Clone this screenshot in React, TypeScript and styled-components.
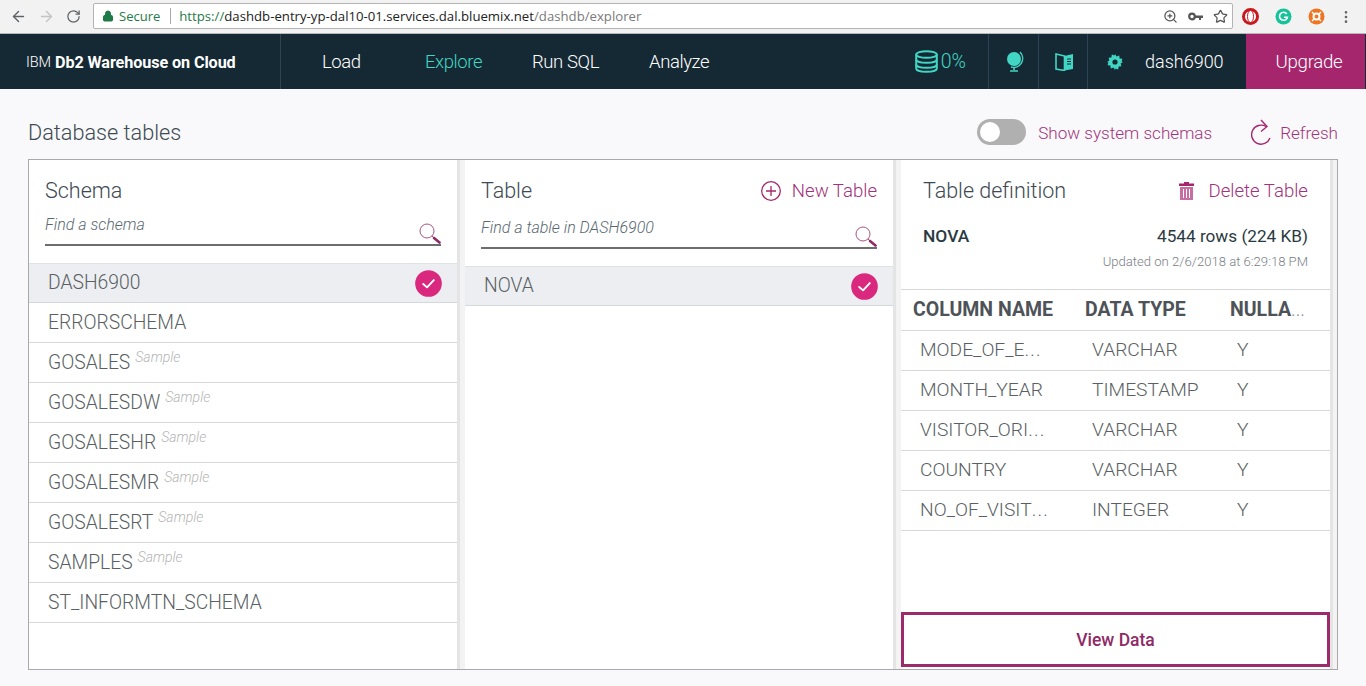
import React from "react";
import styled, { createGlobalStyle } from "styled-components";
import { ArrowLeft, ArrowRight, RotateCw, Lock, ZoomIn, Star, MoreVertical } from "lucide-react";

const Global = createGlobalStyle`
  html, body { margin: 0; padding: 0; background: #f9f9fb; }
  body { font-family: Roboto, "Liberation Sans", sans-serif; font-weight: 300; color: #3d4a52; }
  * { box-sizing: border-box; }
`;

const Page = styled.div`width: 1366px; height: 686px; overflow: hidden; display: flex; flex-direction: column;`;

const Chrome = styled.div`height: 34px; background: #f2f2f2; border-bottom: 1px solid #b8b8b8; display: flex; align-items: center; padding: 0 0 0 10px; flex: none;`;
const NavIcons = styled.div`display: flex; align-items: center; gap: 11px; width: 83px; flex: none; color: #5f6368;`;
const AddressBar = styled.div`width: 1140px; height: 26px; margin-top: -1px; background: #fff; border: 1px solid #b4b4b4; border-radius: 2px; display: flex; align-items: center; padding: 0 4px 0 8px; font: 400 13px "Open Sans", sans-serif;`;
const Secure = styled.span`color: #1e7a46; margin: 0 10px 0 5px;`;
const AddrSep = styled.span`width: 1px; height: 16px; background: #a8a8a8; margin-right: 8px;`;
const Url = styled.span`font-size: 13.2px;`;
const Scheme = styled.span`color: #1e7a46;`;
const Host = styled.span`color: #222;`;
const UrlPath = styled.span`color: #7a7a7a;`;
const AddrIcons = styled.div`margin-left: auto; display: flex; align-items: center; gap: 10px; color: #555;`;
const Extensions = styled.div`display: flex; align-items: center; margin-left: 9px; gap: 16px;`;
const More = styled.div`margin-left: 13px; color: #666; display: flex;`;

const TopNav = styled.header`height: 55px; background: #152935; display: flex; align-items: stretch; flex: none; padding-right: 1px;`;
const Brand = styled.div`width: 281px; flex: none; padding: 2px 0 0 26px; display: flex; align-items: center; gap: 4px; border-right: 1px solid #2c4453; color: #fff; font-size: 14.5px; letter-spacing: -0.1px; b { font-weight: 700; font-size: 16.2px; }`;
const NavItems = styled.nav`display: flex; align-items: center; padding-left: 41px; flex: 1;`;
const NavItem = styled.a<{ $active?: boolean; $w: number }>`width: ${p => p.$w}px; font-size: 18.5px; letter-spacing: -0.4px; color: ${p => (p.$active ? "#41d6c3" : "#fff")};`;
const NavCell = styled.div<{ $w: number }>`width: ${p => p.$w}px; flex: none; display: flex; align-items: center; justify-content: center; border-left: 1px solid #2c4453; padding-left: 2px; color: #fff; font-size: 18.5px;`;
const Usage = styled.div`display: flex; align-items: center; gap: 3px; color: #41d6c3; font-size: 19.5px; margin-right: 22px;`;
const UserCell = styled.div`width: 159px; flex: none; display: flex; align-items: center; padding-left: 19px; gap: 22px; border-left: 1px solid #2c4453; color: #fff; font-size: 18px;`;
const Upgrade = styled.div`width: 119px; flex: none; background: #a6266e; color: #fff; font-size: 18.7px; letter-spacing: -0.3px; display: flex; align-items: center; justify-content: center; padding-left: 7px;`;

const Content = styled.main`flex: 1; padding: 30px 28px 0 28px; display: flex; flex-direction: column;`;
const TitleRow = styled.div`height: 40px; display: flex; align-items: flex-start; justify-content: space-between;`;
const PageTitle = styled.h1`margin: 0; font-size: 21.7px; line-height: 28px; font-weight: 300; color: #3d4a52;`;
const Tools = styled.div`display: flex; align-items: center; height: 26px;`;
const Toggle = styled.div`width: 49px; height: 26px; border-radius: 13px; background: #b0b0b0; padding: 3px; margin-right: 12px;`;
const Knob = styled.div`width: 20px; height: 20px; border-radius: 50%; background: #fff;`;
const ActionText = styled.span<{ $size?: number }>`color: #a2337a; font-size: ${p => p.$size ?? 17.1}px; font-weight: 300; padding-top: 1px;`;
const RefreshBtn = styled.div`display: flex; align-items: center; gap: 9px; margin-left: 39px;`;

const Frame = styled.section`width: 1310px; height: 511px; border: 1px solid #a9a9a9; display: grid; grid-template-columns: 428px 428px 429px; column-gap: 8px; background: #f3f3f3; padding-right: 7px;`;
const Pane = styled.div`background: #fff; display: flex; flex-direction: column; min-width: 0; box-shadow: 3px 0 0 #e4e4e4;`;
const PaneHead = styled.div`padding: 13px 16px 0 16px; display: flex; align-items: center; justify-content: space-between; height: 48px; flex: none;`;
const PaneTitle = styled.h2`margin: 0; font-size: 21.5px; line-height: 24px; font-weight: 300; color: #3d4a52;`;
const HeadAction = styled.div`display: flex; align-items: center;`;
const Search = styled.div<{ $top: number }>`margin: ${p => p.$top}px 16px 17px 16px; height: 32px; border-bottom: 2px solid #6d6d6d; display: flex; justify-content: space-between; flex: none;`;
const Placeholder = styled.span`font-size: 16px; font-style: italic; color: #5a6872; line-height: 18px; padding-top: 2px;`;
const List = styled.div`flex: none;`;
const Row = styled.div<{ $sel?: boolean }>`height: 40px; padding: 0 15px 0 19px; display: flex; align-items: center; justify-content: space-between; font-size: 19.3px; color: #5a5f63; border-bottom: 1px solid ${p => (p.$sel ? "#d4d8dc" : "#d8d8d8")}; background: ${p => (p.$sel ? "#eceef1" : "#fff")}; ${p => (p.$sel ? "border-top: 1px solid #e0e3e6;" : "")}`;
const RowLabel = styled.span`display: flex; align-items: flex-start; line-height: 22px;`;
const Sample = styled.i`font-size: 14px; color: #b4b4b4; margin: -3px 0 0 5px; line-height: 16px;`;

const DefHead = styled.div`padding: 13px 22px 0 22px; height: 48px; display: flex; align-items: center; justify-content: space-between; flex: none;`;
const Summary = styled.div`padding: 16px 22px 0 22px; height: 82px; border-bottom: 1px solid #d8d8d8; flex: none; display: grid; grid-template-columns: 1fr auto; align-content: start;`;
const TableName = styled.div`font-size: 17.4px; line-height: 24px; font-weight: 500; color: #2a3a42;`;
const RowCount = styled.div`font-size: 17.2px; line-height: 24px; font-weight: 400; color: #2a3a42; justify-self: end;`;
const Updated = styled.div`grid-column: 2; justify-self: end; font-size: 13.1px; line-height: 16px; margin-top: 6px; color: #7b8085;`;
const Grid = styled.div`display: grid; grid-template-columns: 172px 145px 1fr; flex: none;`;
const Th = styled.div`height: 41px; border-bottom: 1px solid #d8d8d8; padding: 0 0 2px 12px; display: flex; align-items: center; font-size: 19.5px; font-weight: 700; color: #4d5358; white-space: nowrap;`;
const ThFade = styled.span`font-weight: 300; color: #8a8f93;`;
const Td = styled.div`height: 40px; border-bottom: 1px solid #d8d8d8; padding-left: 19px; font-size: 19.2px; line-height: 38px; color: #5a5f63; white-space: nowrap;`;
const Dots = styled.span`letter-spacing: 1.2px;`;
const Spacer = styled.div`flex: 1;`;
const ViewData = styled.button`height: 55px; margin-bottom: 2px; width: 429px; border: 3px solid #9b2b6b; background: #fff; color: #8f2a66; font: 500 17.5px Roboto, sans-serif; padding-top: 2px; flex: none;`;

const Glyph = styled.svg<{ $right?: number; $end?: boolean }>`display: block; flex: none; margin-right: ${p => p.$right ?? 0}px; align-self: ${p => (p.$end ? "flex-end" : "auto")};`;
const Check = () => (
  <Glyph width="27" height="27" viewBox="0 0 28 28">
    <circle cx="14" cy="14" r="13.8" fill="#d9287e" />
    <path d="M8.500 14.500l4 3.500 7-7.500" fill="none" stroke="#fff" strokeWidth="2" strokeLinecap="round" strokeLinejoin="round" />
  </Glyph>
);
const SearchIcon = () => (
  <Glyph $end width="22" height="21" viewBox="0 0 22 21">
    <circle cx="8" cy="8" r="7" fill="none" stroke="#a6557f" strokeWidth="1" />
    <path d="M13 13l2 2" stroke="#a6557f" strokeWidth="1" />
    <path d="M15 15l5.500 4.500" stroke="#8f2a66" strokeWidth="2.600" strokeLinecap="round" />
  </Glyph>
);

const schemas: [string, boolean][] = [["DASH6900", false], ["ERRORSCHEMA", false], ["GOSALES", true], ["GOSALESDW", true], ["GOSALESHR", true], ["GOSALESMR", true], ["GOSALESRT", true], ["SAMPLES", true], ["ST_INFORMTN_SCHEMA", false]];
const cols = [["MODE_OF_E", "VARCHAR", 1], ["MONTH_YEAR", "TIMESTAMP", 0], ["VISITOR_ORI", "VARCHAR", 1], ["COUNTRY", "VARCHAR", 0], ["NO_OF_VISIT", "INTEGER", 1]] as const;

export default function App() {
  return (
    <Page>
      <Global />
      <Chrome>
        <NavIcons>
          <ArrowLeft size={17} color="#5f6368" />
          <ArrowRight size={17} color="#c4c4c4" />
          <RotateCw size={15} color="#5f6368" />
        </NavIcons>
        <AddressBar>
          <Lock size={12} color="#1e7a46" fill="#1e7a46" />
          <Secure>Secure</Secure>
          <AddrSep />
          <Url><Scheme>https://</Scheme><Host>dashdb-entry-yp-dal10-01.services.dal.bluemix.net</Host><UrlPath>/dashdb/explorer</UrlPath></Url>
          <AddrIcons>
            <ZoomIn size={15} />
            <Glyph width="15" height="9" viewBox="0 0 15 9">
              <circle cx="4" cy="4.500" r="2.800" fill="none" stroke="#555" strokeWidth="2.200" />
              <path d="M6 3.500h9v2.500h-2v2h-2v-2H6z" fill="#555" />
            </Glyph>
            <Star size={15} />
          </AddrIcons>
        </AddressBar>
        <Extensions>
          <Glyph width="17" height="17" viewBox="0 0 17 17"><circle cx="8.500" cy="8.500" r="7" fill="#fff" stroke="#c9171e" strokeWidth="3" /><ellipse cx="8.500" cy="8.500" rx="3" ry="6" fill="#fff" stroke="#c9171e" strokeWidth="1" /></Glyph>
          <Glyph width="17" height="17" viewBox="0 0 17 17"><circle cx="8.500" cy="8.500" r="8" fill="#15c39a" /><path d="M11.800 6a4 4 0 1 0 .6 3.200H9" fill="none" stroke="#fff" strokeWidth="1.600" /></Glyph>
          <Glyph width="17" height="17" viewBox="0 0 17 17"><circle cx="8.500" cy="8.500" r="8" fill="#ee7623" /><circle cx="8.500" cy="8.500" r="3" fill="none" stroke="#fff" strokeWidth="2" /><path d="M4 4l2.500 2.500M13 4l-2.500 2.500M4 13l2.500-2.500M13 13l-2.500-2.500" stroke="#fff" strokeWidth="1.400" /></Glyph>
        </Extensions>
        <More><MoreVertical size={16} /></More>
      </Chrome>
      <TopNav>
        <Brand><span>IBM</span><b>Db2 Warehouse on Cloud</b></Brand>
        <NavItems>
          <NavItem $w={103}>Load</NavItem>
          <NavItem $w={107} $active>Explore</NavItem>
          <NavItem $w={117}>Run SQL</NavItem>
          <NavItem $w={80}>Analyze</NavItem>
        </NavItems>
        <Usage>
          <Glyph width="23" height="23" viewBox="0 0 23 23">
            <g fill="none" stroke="#41d6c3" strokeWidth="2">
              <ellipse cx="11.500" cy="4.500" rx="10.300" ry="3.300" />
              <path d="M1.200 4.500v14c0 1.900 4.600 3.300 10.300 3.300s10.300-1.400 10.300-3.300v-14" />
              <path d="M1.200 9.500c0 1.900 4.600 3.300 10.300 3.300s10.300-1.400 10.300-3.300M1.200 14.500c0 1.900 4.600 3.300 10.300 3.300s10.300-1.400 10.300-3.300" />
            </g>
          </Glyph>
          <span>0%</span>
        </Usage>
        <NavCell $w={50}>
          <Glyph width="20" height="21" viewBox="0 0 20 21">
            <circle cx="9" cy="8" r="7" fill="#41d6c3" />
            <path d="M15 1a9 9 0 0 1-9 15" fill="none" stroke="#41d6c3" strokeWidth="1.400" />
            <path d="M9 16v3M5 20h8" stroke="#41d6c3" strokeWidth="1.600" />
          </Glyph>
        </NavCell>
        <NavCell $w={49}>
          <Glyph width="19" height="18" viewBox="0 0 19 18">
            <path d="M9.500 3L1 1v15l8.500 1.500z" fill="none" stroke="#41d6c3" strokeWidth="1.600" />
            <path d="M9.500 3L18 1v15l-8.500 1.500z" fill="#41d6c3" />
            <path d="M12 6h4M12 8.500h4M12 11h4" stroke="#152935" strokeWidth="1" />
          </Glyph>
        </NavCell>
        <UserCell>
          <Glyph width="16" height="16" viewBox="0 0 16 16">
            <path d="M8 0l1.500 2.400 2.700-.8.4 2.800 2.800.4-.8 2.700L16 8l-2.400 1.500.8 2.700-2.800.4-.4 2.800-2.700-.8L8 16l-1.500-2.400-2.700.8-.4-2.800-2.800-.4.8-2.700L0 8l2.400-1.500-.8-2.700 2.800-.4.4-2.800 2.700.8z" fill="#41d6c3" />
            <circle cx="8" cy="8" r="2.600" fill="#152935" />
          </Glyph>
          <span>dash6900</span>
        </UserCell>
        <Upgrade>Upgrade</Upgrade>
      </TopNav>
      <Content>
        <TitleRow>
          <PageTitle>Database tables</PageTitle>
          <Tools>
            <Toggle><Knob /></Toggle>
            <ActionText>Show system schemas</ActionText>
            <RefreshBtn>
              <Glyph width="20" height="26" viewBox="0 0 20 26">
                <path d="M15 7.500A9.500 9.500 0 1 0 19 19" fill="none" stroke="#a6266e" strokeWidth="1.400" />
                <path d="M10 1l6 6.500-6 5" fill="none" stroke="#a6266e" strokeWidth="1.400" />
              </Glyph>
              <ActionText>Refresh</ActionText>
            </RefreshBtn>
          </Tools>
        </TitleRow>
        <Frame>
          <Pane>
            <PaneHead><PaneTitle>Schema</PaneTitle></PaneHead>
            <Search $top={6}><Placeholder>Find a schema</Placeholder><SearchIcon /></Search>
            <List>
              {schemas.map(([n, s], i) => (
                <Row key={n} $sel={i === 0}>
                  <RowLabel>{n}{s && <Sample>Sample</Sample>}</RowLabel>
                  {i === 0 && <Check />}
                </Row>
              ))}
            </List>
          </Pane>
          <Pane>
            <PaneHead>
              <PaneTitle>Table</PaneTitle>
              <HeadAction>
                <Glyph $right={11} width="20" height="20" viewBox="0 0 20 20">
                  <circle cx="10" cy="10" r="9.300" fill="none" stroke="#a6266e" strokeWidth="1.300" />
                  <path d="M10 5v10M5 10h10" stroke="#a6266e" strokeWidth="1.300" />
                </Glyph>
                <ActionText $size={18.6}>New Table</ActionText>
              </HeadAction>
            </PaneHead>
            <Search $top={9}><Placeholder>Find a table in DASH6900</Placeholder><SearchIcon /></Search>
            <List><Row $sel><RowLabel>NOVA</RowLabel><Check /></Row></List>
          </Pane>
          <Pane>
            <DefHead>
              <PaneTitle>Table definition</PaneTitle>
              <HeadAction>
                <Glyph $right={14} width="15" height="20" viewBox="0 0 15 20">
                  <path d="M5 1h5v1.500h5V5H0V2.500h5z" fill="#a6266e" />
                  <path d="M1 6h13v13H1z" fill="#c86da3" />
                  <path d="M4.500 8v9M7.500 8v9M10.500 8v9" stroke="#fff" strokeWidth="1" />
                </Glyph>
                <ActionText $size={18.6}>Delete Table</ActionText>
              </HeadAction>
            </DefHead>
            <Summary>
              <TableName>NOVA</TableName>
              <RowCount>4544 rows (224 KB)</RowCount>
              <Updated>Updated on 2/6/2018 at 6:29:18 PM</Updated>
            </Summary>
            <Grid>
              <Th>COLUMN NAME</Th><Th>DATA TYPE</Th><Th>NULLA<ThFade>...</ThFade></Th>
              {cols.map(([a, b, cut]) => (
                <React.Fragment key={a}><Td>{a}{cut ? <Dots>...</Dots> : null}</Td><Td>{b}</Td><Td>Y</Td></React.Fragment>
              ))}
            </Grid>
            <Spacer />
            <ViewData>View Data</ViewData>
          </Pane>
        </Frame>
      </Content>
    </Page>
  );
}
